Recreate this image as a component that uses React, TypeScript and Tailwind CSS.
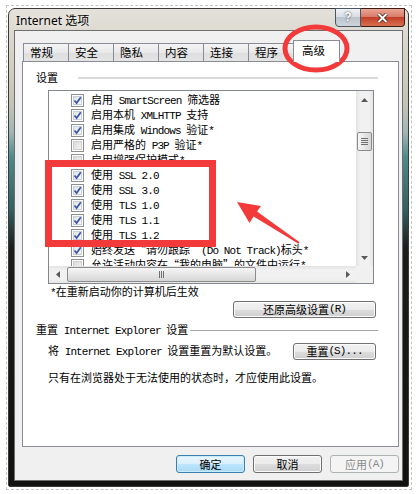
import type { ReactNode } from "react";

const MONO = "font-['Liberation_Mono',monospace] tracking-[-0.9px]";

function Mixed({ text }: { text: string }) {
  const parts = text.split(/([\x20-\x7e]+)/).filter(Boolean);
  return (
    <>
      {parts.map((p, i) =>
        /^[\x20-\x7e]+$/.test(p) ? (
          <span key={i} className={MONO}>
            {p}
          </span>
        ) : (
          <span key={i}>{p}</span>
        )
      )}
    </>
  );
}

function Box({ on }: { on: boolean }) {
  return (
    <span className="flex h-[13px] w-[13px] shrink-0 items-center justify-center border border-[#8e8f8f] bg-white">
      <span
        className={
          on
            ? "flex h-[9px] w-[9px] items-center justify-center border border-[#c6cfdd] bg-[linear-gradient(135deg,#dfe5ee,#f7f8fa)]"
            : "flex h-[9px] w-[9px] items-center justify-center border border-[#cfcfcf] bg-[linear-gradient(135deg,#d9d9d9,#f5f5f5)]"
        }
      >
        {on && (
          <svg width="9" height="9" viewBox="0 0 9 9" className="-m-px">
            <path d="M1.5 4.5 L3.6 7 L7.8 1.2" fill="none" stroke="#3b55a6" strokeWidth="1.7" />
          </svg>
        )}
      </span>
    </span>
  );
}

function Tri({ dir }: { dir: "up" | "down" | "left" | "right" }) {
  const pts = {
    up: "0,4 3.5,0 7,4",
    down: "0,0 7,0 3.5,4",
    left: "4,0 4,7 0,3.5",
    right: "0,0 0,7 4,3.5",
  }[dir];
  const vertical = dir === "up" || dir === "down";
  return (
    <svg width={vertical ? 7 : 4} height={vertical ? 4 : 7}>
      <polygon points={pts} fill="#5a5a5a" />
    </svg>
  );
}

function Btn({ children, className }: { children: ReactNode; className: string }) {
  return (
    <div
      className={
        "flex items-center justify-center rounded-[3px] border border-[#707070] bg-[linear-gradient(#f2f2f2_0%,#ebebeb_50%,#dddddd_51%,#cfcfcf_100%)] shadow-[inset_0_0_0_1px_#fbfbfb] " +
        className
      }
    >
      {children}
    </div>
  );
}

const rows: [string, boolean][] = [
  ["启用 SmartScreen 筛选器", true],
  ["启用本机 XMLHTTP 支持", true],
  ["启用集成 Windows 验证*", true],
  ["启用严格的 P3P 验证*", false],
  ["启用增强保护模式*", false],
  ["使用 SSL 2.0", true],
  ["使用 SSL 3.0", true],
  ["使用 TLS 1.0", true],
  ["使用 TLS 1.1", true],
  ["使用 TLS 1.2", true],
  ["始终发送“请勿跟踪”(Do Not Track)标头*", true],
  ["允许活动内容在“我的电脑”的文件中运行*", false],
];

const tabs = ["常规", "安全", "隐私", "内容", "连接", "程序"];

export default function App() {
  return (
    <div className="relative h-[494px] w-[419px] overflow-hidden bg-white pl-[6px] pt-[5px] font-['Noto_Sans_CJK_SC',sans-serif] text-[11px] leading-[15px] text-black">
      <div className="h-[485px] w-[406px] border border-dashed border-[#c4c4c4]">
        {/* window frame */}
        <div className="ml-[1px] mt-[2px] flex h-[479px] w-[401px] flex-col rounded-t-[7px] rounded-b-[2px] border border-[#3a3a38] bg-[linear-gradient(180deg,#e4e1da_0%,#d2cec3_12%,#c4c3b8_20%,#9fb5b2_26%,#4f8a8c_31%,#335f61_42%,#1d1e1b_50%,#121211_100%)]">
          {/* title bar */}
          <div className="flex h-[22px] items-start">
            <div className="pl-[7px] pt-[4px] font-['Noto_Sans','Noto_Sans_CJK_SC',sans-serif] text-[12px] leading-[15px] [text-shadow:0_0_6px_#fff]">
              Internet 选项
            </div>
            <div className="ml-auto mr-[3px] -mt-px flex">
              <div className="flex h-[19px] w-[26px] items-center justify-center rounded-bl-[4px] border border-[#4a5663] bg-[linear-gradient(#f1f3f6,#d9dee4_45%,#bcc4cd_50%,#cdd4db)] font-['Liberation_Sans',sans-serif] text-[12px] font-bold text-white [text-shadow:0_0_2px_#1d2733]">
                ?
              </div>
              <div className="flex h-[19px] w-[44px] items-center justify-center rounded-br-[4px] border border-l-0 border-[#3d1a14] bg-[linear-gradient(#eaa896,#d87b69_45%,#c2402a_50%,#d9704f)]">
                <svg width="11" height="10" viewBox="0 0 11 10">
                  <path d="M1.5 1 L9.5 9 M9.5 1 L1.5 9" stroke="#3a1710" strokeWidth="3.4" />
                  <path d="M1.5 1 L9.5 9 M9.5 1 L1.5 9" stroke="#ffffff" strokeWidth="2" />
                </svg>
              </div>
            </div>
          </div>

          {/* client area */}
          <div className="mx-[6px] flex h-[449px] flex-col bg-[#f0f0f0] pl-[7px] pr-[3px] pt-[9px] shadow-[0_0_0_1px_#6e6e6e]">
            {/* tabs */}
            <div className="flex h-[21px] items-end pl-[1px]">
              {tabs.map((t, i) => (
                <div
                  key={t}
                  className={
                    i > 0
                      ? "-ml-px h-[18px] w-[46px] border border-b-0 border-[#898c95] bg-[linear-gradient(#f4f4f4,#e9e9e9_50%,#dedede_51%,#e4e4e4)] pl-[6px] text-[11.5px] leading-[16px]"
                      : "h-[18px] w-[46px] border border-b-0 border-[#898c95] bg-[linear-gradient(#f4f4f4,#e9e9e9_50%,#dedede_51%,#e4e4e4)] pl-[6px] text-[11.5px] leading-[16px]"
                  }
                >
                  {t}
                </div>
              ))}
              <div className="relative z-10 -mb-px -ml-px h-[22px] w-[47px] border border-b-0 border-[#898c95] bg-white pl-[8px] pt-[2px] text-[11.5px] leading-[15px]">
                高级
              </div>
            </div>

            {/* panel */}
            <div className="flex h-[386px] flex-col border border-[#898c95] bg-white">
              <div className="ml-[13px] mr-[20px] mt-[8px] flex h-[15px] items-center">
                <span className="w-[42px]">设置</span>
                <span className="h-[2px] flex-1 bg-[#d9d9d9]" />
              </div>

              {/* list box */}
              <div className="ml-[25px] mt-[5px] flex h-[194px] w-[326px] flex-col border border-[#828790]">
                <div className="flex h-[175px]">
                  <div className="w-[307px] overflow-hidden pt-[2px]">
                    {rows.map(([t, on]) => (
                      <div key={t} className="flex h-[15px] items-center whitespace-nowrap pl-[22px]">
                        <Box on={on} />
                        <span className="ml-[7px]">
                          <Mixed text={t} />
                        </span>
                      </div>
                    ))}
                  </div>
                  <div className="flex w-[17px] flex-col bg-[linear-gradient(90deg,#e3e3e3,#f1f1f1_25%,#f1f1f1_75%,#e6e6e6)]">
                    <div className="flex h-[17px] items-center justify-center">
                      <Tri dir="up" />
                    </div>
                    <div className="flex-1">
                      <div className="mx-[1px] mt-[24px] flex h-[19px] flex-col items-center justify-center gap-[1px] rounded-[2px] border border-[#8b8b8b] bg-[linear-gradient(90deg,#f6f6f6,#e6e6e6_50%,#d6d6d6)]">
                        <span className="h-px w-[7px] bg-[#6f6f6f]" />
                        <span className="h-px w-[7px] bg-[#6f6f6f]" />
                        <span className="h-px w-[7px] bg-[#6f6f6f]" />
                        <span className="h-px w-[7px] bg-[#6f6f6f]" />
                      </div>
                    </div>
                    <div className="flex h-[17px] items-center justify-center">
                      <Tri dir="down" />
                    </div>
                  </div>
                </div>
                <div className="flex h-[17px]">
                  <div className="flex w-[307px] bg-[linear-gradient(#e3e3e3,#f1f1f1_25%,#f1f1f1_75%,#e6e6e6)]">
                    <div className="flex w-[17px] items-center justify-center">
                      <Tri dir="left" />
                    </div>
                    <div className="my-[1px] ml-[1px] flex w-[189px] items-center justify-center gap-[1px] rounded-[2px] border border-[#8b8b8b] bg-[linear-gradient(#f6f6f6,#e6e6e6_50%,#d6d6d6)]">
                      <span className="h-[7px] w-px bg-[#6f6f6f]" />
                      <span className="h-[7px] w-px bg-[#6f6f6f]" />
                      <span className="h-[7px] w-px bg-[#6f6f6f]" />
                    </div>
                    <div className="flex-1" />
                    <div className="flex w-[17px] items-center justify-center">
                      <Tri dir="right" />
                    </div>
                  </div>
                  <div className="w-[17px] bg-[#f0f0f0]" />
                </div>
              </div>

              <div className="ml-[27px] h-[15px]">
                <Mixed text="*在重新启动你的计算机后生效" />
              </div>

              <div className="mr-[22px] mt-[2px] flex justify-end">
                <Btn className="h-[17px] w-[143px]">
                  <Mixed text="还原高级设置(R)" />
                </Btn>
              </div>

              <div className="ml-[13px] mr-[20px] mt-[5px] flex h-[15px] items-center">
                <span className="whitespace-nowrap">
                  <Mixed text="重置 Internet Explorer 设置" />
                </span>
                <span className="ml-[2px] h-px flex-1 bg-[#a7a7a7]" />
              </div>

              <div className="mr-[22px] mt-[5px] flex h-[17px] items-center">
                <span className="ml-[25px] whitespace-nowrap">
                  <Mixed text="将 Internet Explorer 设置重置为默认设置。" />
                </span>
                <div className="flex-1" />
                <Btn className="h-[17px] w-[83px]">
                  <Mixed text="重置(S)..." />
                </Btn>
              </div>

              <div className="ml-[25px] mt-[10px] h-[15px] whitespace-nowrap">
                只有在浏览器处于无法使用的状态时，才应使用此设置。
              </div>
            </div>

            {/* dialog buttons */}
            <div className="mt-[8px] flex justify-end gap-[8px]">
              <div className="flex h-[18px] w-[69px] items-center justify-center rounded-[3px] border border-[#3c7fb1] bg-[linear-gradient(#eaf6fd_0%,#d9f0fc_50%,#bee6fd_51%,#a7d9f5_100%)] shadow-[inset_0_0_0_1px_#c9ecfd]">
                确定
              </div>
              <Btn className="h-[18px] w-[69px]">取消</Btn>
              <div className="flex h-[18px] w-[69px] items-center justify-center rounded-[3px] border border-[#adb2b5] bg-[#f4f4f4] text-[#8a8a8a]">
                <Mixed text="应用(A)" />
              </div>
            </div>
          </div>
        </div>
      </div>

      {/* annotation overlay */}
      <svg className="pointer-events-none absolute left-0 top-0" width="419" height="494">
        <ellipse cx="316" cy="48.5" rx="31" ry="21.5" fill="none" stroke="#f23a3a" strokeWidth="5" />
        <rect x="48.5" y="163.5" width="164" height="80" fill="none" stroke="#f23a3a" strokeWidth="7" />
        <polygon
          points="237,202 261,206 257,211.6 299.6,242.2 298.4,243.8 253.6,216.6 249.5,223"
          fill="#f23a3a"
        />
      </svg>
    </div>
  );
}
